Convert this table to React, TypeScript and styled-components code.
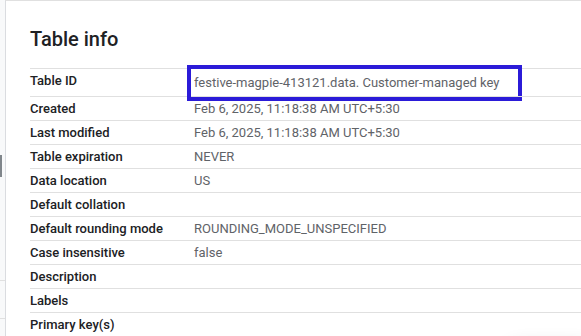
import React from "react";
import styled, { createGlobalStyle } from "styled-components";

const GlobalStyle = createGlobalStyle`
	html, body {
		margin: 0;
		padding: 0;
		background: #ffffff;
		overflow: hidden;
	}
	body {
		font-family: Roboto, "Noto Sans", Arial, sans-serif;
		-webkit-font-smoothing: antialiased;
	}
`;

interface IInfoRow {
	label: string
	value?: string
}

const rows: IInfoRow[] = [
	{ label: "Created", value: "Feb 6, 2025, 11:18:38 AM UTC+5:30" },
	{ label: "Last modified", value: "Feb 6, 2025, 11:18:38 AM UTC+5:30" },
	{ label: "Table expiration", value: "NEVER" },
	{ label: "Data location", value: "US" },
	{ label: "Default collation" },
	{ label: "Default rounding mode", value: "ROUNDING_MODE_UNSPECIFIED" },
	{ label: "Case insensitive", value: "false" },
	{ label: "Description" },
	{ label: "Labels" },
	{ label: "Primary key(s)" }
];

const Page = styled.div`
	display: flex;
	height: 336px;
	overflow: hidden;
	position: relative;
`;

// strip of the page that sits behind the panel
const SideStrip = styled.div`
	width: 5px;
	flex-shrink: 0;
	background: #f8f9fa;
	display: flex;
	flex-direction: column;
	padding-top: 155px;
	box-sizing: border-box;
`;

const ScrollMark = styled.div`
	width: 2px;
	height: 22px;
	background: #80868b;
`;

const StripLine = styled.div<{ $gap: number }>`
	height: 1px;
	background: #e0e0e0;
	margin-top: ${props => props.$gap}px;
`;

const Panel = styled.section`
	flex: 1;
	border-top: 1px solid #e0e0e0;
	border-left: 1px solid #dadce0;
	padding: 24px 0 0 24px;
	background: #ffffff;
	min-width: 0;
`;

const Title = styled.h2`
	margin: 0 0 15px;
	font-size: 20px;
	line-height: 28px;
	font-weight: 500;
	color: #202124;
`;

const InfoTable = styled.div`
	display: grid;
	grid-template-columns: 164px 1fr;
	font-size: 13px;
	line-height: 23px;
`;

const Label = styled.div<{ $tall?: boolean }>`
	border-top: 1px solid #e0e0e0;
	height: ${props => props.$tall ? 27 : 23}px;
	font-weight: 500;
	color: #202124;
	white-space: nowrap;
`;

const Value = styled.div<{ $tall?: boolean }>`
	border-top: 1px solid #e0e0e0;
	height: ${props => props.$tall ? 27 : 23}px;
	box-sizing: content-box;
	color: #5f6368;
	white-space: nowrap;
	position: relative;
`;

const IdText = styled.span`
	display: inline-block;
	padding-top: 2px;
`;

// blue outline drawn round the table id
const Highlight = styled.div`
	position: absolute;
	left: -7px;
	top: -4px;
	width: 327px;
	height: 28px;
	border: 4px solid #2b1bd8;
	pointer-events: none;
`;

// button floating below the fold, only its shadow shows
const FloatingShadow = styled.div`
	position: absolute;
	right: -20px;
	bottom: -52px;
	width: 100px;
	height: 44px;
	border-radius: 22px;
	box-shadow: 0 0 18px rgba(0, 0, 0, 0.12);
	background: #ffffff;
`;

const App = () => {
	return (
		<>
			<GlobalStyle />
			<Page>
				<SideStrip>
					<ScrollMark />
					<StripLine $gap={103} />
					<StripLine $gap={37} />
				</SideStrip>
				<Panel>
					<Title>Table info</Title>
					<InfoTable>
						<Label $tall>Table ID</Label>
						<Value $tall>
							<IdText>festive-magpie-413121.data. Customer-managed key</IdText>
							<Highlight />
						</Value>
						{rows.map(row => (
							<React.Fragment key={row.label}>
								<Label>{row.label}</Label>
								<Value>{row.value ?? ""}</Value>
							</React.Fragment>
						))}
					</InfoTable>
				</Panel>
				<FloatingShadow />
			</Page>
		</>
	);
};

export default App;
